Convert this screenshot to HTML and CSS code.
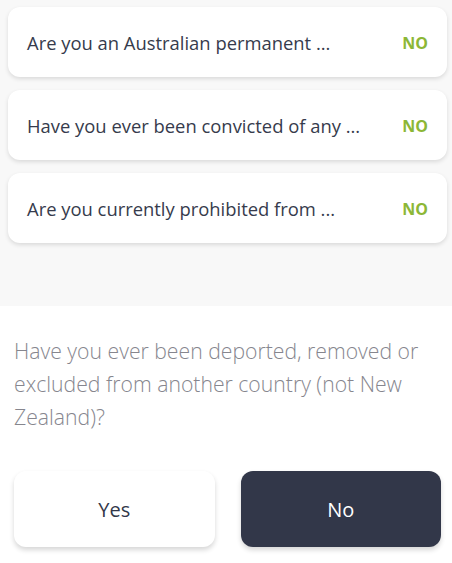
FILE: index.html
```html
<!DOCTYPE html>
<html>
<head>
<meta charset="utf-8">
<link rel="stylesheet" href="styles.css">
</head>
<body>
<div class="screen">
  <section class="answers">
    <div class="card"><span class="q">Are you an Australian permanent ...</span><span class="a">NO</span></div>
    <div class="card"><span class="q">Have you ever been convicted of any ...</span><span class="a">NO</span></div>
    <div class="card"><span class="q">Are you currently prohibited from ...</span><span class="a">NO</span></div>
  </section>
  <section class="ask">
    <p class="question">Have you ever been deported, removed or excluded from another country (not New Zealand)?</p>
    <div class="buttons">
      <button class="btn yes">Yes</button>
      <button class="btn no">No</button>
    </div>
  </section>
</div>
</body>
</html>
```
FILE: styles.css
```css
* {
  box-sizing: border-box;
}
html, body {
  margin: 0;
  padding: 0;
  background: #ffffff;
}
body {
  font-family: "Open Sans", "Noto Sans", sans-serif;
  width: 452px;
  height: 563px;
  overflow: hidden;
}
.screen {
  display: flex;
  flex-direction: column;
}
.answers {
  background: #f8f8f8;
  padding: 7px 5px 0 8px;
  height: 306px;
  display: flex;
  flex-direction: column;
  gap: 13px;
}
.card {
  background: #fff;
  border-radius: 12px;
  height: 70px;
  flex: none;
  box-shadow: 0 2px 4px rgba(0,0,0,0.12);
  display: flex;
  align-items: center;
  justify-content: space-between;
  padding: 1px 19px 0 19px;
}
.q {
  font-size: 18.4px;
  color: #363b4c;
}
.a {
  font-size: 16px;
  font-weight: 700;
  color: #8cb736;
}
.ask {
  padding: 28px 11px 0 14px;
}
.question {
  margin: 0;
  font-size: 21.2px;
  line-height: 33px;
  font-weight: 300;
  color: #86868e;
}
.buttons {
  display: flex;
  gap: 26px;
  margin-top: 38px;
}
.btn {
  flex: 1;
  height: 76px;
  border: none;
  border-radius: 12px;
  font-family: inherit;
  font-size: 20px;
}
.yes {
  background: #fff;
  color: #323749;
  box-shadow: 0 3px 5px rgba(0,0,0,0.16);
}
.no {
  background: #323749;
  color: #fff;
  box-shadow: 0 3px 5px rgba(0,0,0,0.16);
}
```
